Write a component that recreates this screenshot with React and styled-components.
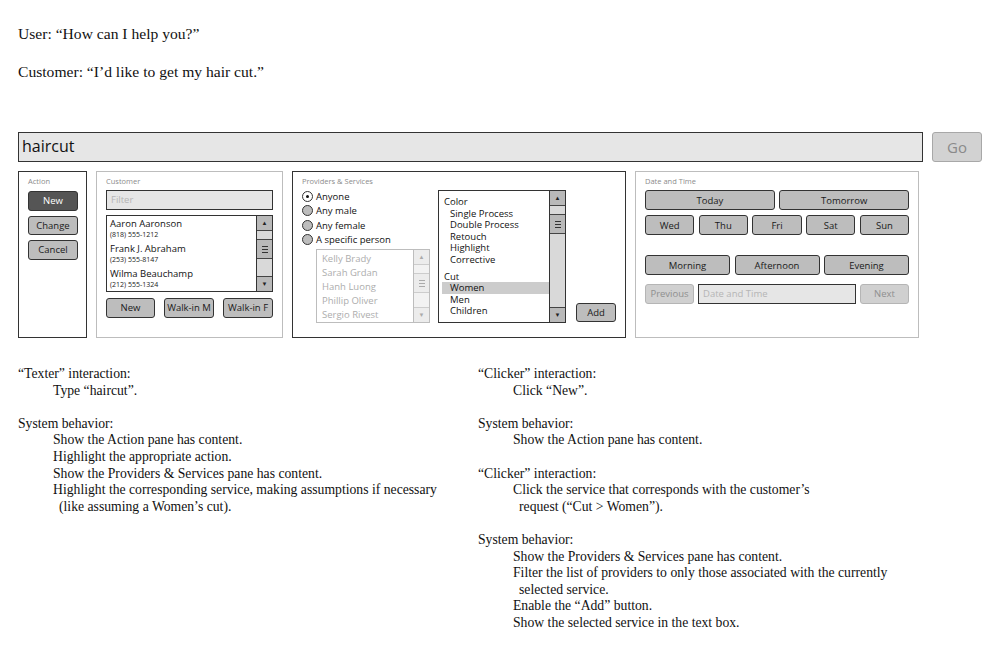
import styled, { createGlobalStyle } from 'styled-components';

const GlobalStyle = createGlobalStyle`
    body {
        margin: 0;
        background: #ffffff;
        color: #111111;
        font-family: 'Liberation Serif', 'Times New Roman', serif;
    }
`;

const customers = [
    { name: 'Aaron Aaronson', phone: '(818) 555-1212' },
    { name: 'Frank J. Abraham', phone: '(253) 555-8147' },
    { name: 'Wilma Beauchamp', phone: '(212) 555-1324' },
];

const providers = ['Kelly Brady', 'Sarah Grdan', 'Hanh Luong', 'Phillip Oliver', 'Sergio Rivest'];

const services = [
    { group: 'Color', items: ['Single Process', 'Double Process', 'Retouch', 'Highlight', 'Corrective'] },
    { group: 'Cut', items: ['Women', 'Men', 'Children'] },
];

function ScrollBar({ disabled }) {
    return (
        <Scroll $disabled={disabled}>
            <Arrow $disabled={disabled}>▲</Arrow>
            <TrackPiece $disabled={disabled} $h={8} />
            <Thumb $disabled={disabled}>
                <Grip $disabled={disabled} />
                <Grip $disabled={disabled} />
                <Grip $disabled={disabled} />
            </Thumb>
            <TrackPiece $disabled={disabled} $grow />
            <Arrow $disabled={disabled}>▼</Arrow>
        </Scroll>
    );
}

export default function App() {
    return (
        <Page>
            <GlobalStyle />
            <Dialog>
                <p>User: “How can I help you?”</p>
                <p>Customer: “I’d like to get my hair cut.”</p>
            </Dialog>

            <SearchRow>
                <SearchBox>haircut</SearchBox>
                <GoButton>Go</GoButton>
            </SearchRow>

            <PaneRow>
                <Pane $w={69} $dark>
                    <PaneLabel>Action</PaneLabel>
                    <ActionStack>
                        <Btn $primary $w={50}>New</Btn>
                        <Btn $w={50}>Change</Btn>
                        <Btn $w={50}>Cancel</Btn>
                    </ActionStack>
                </Pane>

                <Pane $w={187}>
                    <PaneLabel>Customer</PaneLabel>
                    <FilterBox>Filter</FilterBox>
                    <ListBox $h={77}>
                        <ListBody>
                            {customers.map((c) => (
                                <CustomerItem key={c.name}>
                                    <CustomerName>{c.name}</CustomerName>
                                    <CustomerPhone>{c.phone}</CustomerPhone>
                                </CustomerItem>
                            ))}
                        </ListBody>
                        <ScrollBar />
                    </ListBox>
                    <ButtonRow>
                        <Btn $w={49}>New</Btn>
                        <Btn $w={50}>Walk-in M</Btn>
                        <Btn $w={50}>Walk-in F</Btn>
                    </ButtonRow>
                </Pane>

                <Pane $w={334} $dark>
                    <PaneLabel>Providers &amp; Services</PaneLabel>
                    <ProvidersLayout>
                        <ProviderColumn>
                            <RadioList>
                                <RadioRow><Radio $checked />Anyone</RadioRow>
                                <RadioRow><Radio />Any male</RadioRow>
                                <RadioRow><Radio />Any female</RadioRow>
                                <RadioRow><Radio />A specific person</RadioRow>
                            </RadioList>
                            <ListBox $h={74} $w={114} $light>
                                <ListBody $pad="2px 0 0 5px">
                                    {providers.map((p) => (
                                        <ProviderItem key={p}>{p}</ProviderItem>
                                    ))}
                                </ListBody>
                                <ScrollBar disabled />
                            </ListBox>
                        </ProviderColumn>
                        <ListBox $h={133} $w={128}>
                            <ListBody $pad="5px 0 0 3px">
                                {services.map((s) => (
                                    <ServiceGroup key={s.group}>
                                        <ServiceItem>{s.group}</ServiceItem>
                                        {s.items.map((it) => (
                                            <ServiceItem key={it} $sub $selected={it === 'Women'}>
                                                {it}
                                            </ServiceItem>
                                        ))}
                                    </ServiceGroup>
                                ))}
                            </ListBody>
                            <ScrollBar />
                        </ListBox>
                        <AddButton $w={40}>Add</AddButton>
                    </ProvidersLayout>
                </Pane>

                <Pane $w={284}>
                    <PaneLabel>Date and Time</PaneLabel>
                    <DateGrid $cols={2}>
                        <Btn>Today</Btn>
                        <Btn>Tomorrow</Btn>
                    </DateGrid>
                    <DateGrid $cols={5} $top={5}>
                        <Btn>Wed</Btn>
                        <Btn>Thu</Btn>
                        <Btn>Fri</Btn>
                        <Btn>Sat</Btn>
                        <Btn>Sun</Btn>
                    </DateGrid>
                    <DateGrid $cols={3} $top={20}>
                        <Btn>Morning</Btn>
                        <Btn>Afternoon</Btn>
                        <Btn>Evening</Btn>
                    </DateGrid>
                    <NavRow>
                        <Btn $disabled $w={49}>Previous</Btn>
                        <DateBox>Date and Time</DateBox>
                        <Btn $disabled $w={49}>Next</Btn>
                    </NavRow>
                </Pane>
            </PaneRow>

            <Notes>
                <NoteColumn>
                    <p>“Texter” interaction:</p>
                    <Indent>Type “haircut”.</Indent>
                    <Blank />
                    <p>System behavior:</p>
                    <Indent>Show the Action pane has content.</Indent>
                    <Indent>Highlight the appropriate action.</Indent>
                    <Indent>Show the Providers &amp; Services pane has content.</Indent>
                    <Indent>Highlight the corresponding service, making assumptions if necessary</Indent>
                    <Indent $more>(like assuming a Women’s cut).</Indent>
                </NoteColumn>
                <NoteColumn>
                    <p>“Clicker” interaction:</p>
                    <Indent>Click “New”.</Indent>
                    <Blank />
                    <p>System behavior:</p>
                    <Indent>Show the Action pane has content.</Indent>
                    <Blank />
                    <p>“Clicker” interaction:</p>
                    <Indent>Click the service that corresponds with the customer’s</Indent>
                    <Indent $more>request (“Cut &gt; Women”).</Indent>
                    <Blank />
                    <p>System behavior:</p>
                    <Indent>Show the Providers &amp; Services pane has content.</Indent>
                    <Indent>Filter the list of providers to only those associated with the currently</Indent>
                    <Indent $more>selected service.</Indent>
                    <Indent>Enable the “Add” button.</Indent>
                    <Indent>Show the selected service in the text box.</Indent>
                </NoteColumn>
            </Notes>
        </Page>
    );
}

const Page = styled.div`
    width: 1000px;
    height: 662px;
    box-sizing: border-box;
    padding: 25px 18px 0;
    overflow: hidden;
`;

const Dialog = styled.div`
    display: flex;
    flex-direction: column;
    row-gap: 20px;
    font-size: 15.6px;
    line-height: 18px;

    p {
        margin: 0;
    }
`;

const SearchRow = styled.div`
    display: flex;
    column-gap: 9px;
    margin-top: 51px;
    height: 30px;
`;

const SearchBox = styled.div`
    width: 905px;
    box-sizing: border-box;
    background: #e6e6e6;
    border: 1.5px solid #333333;
    font-family: 'Open Sans', sans-serif;
    font-size: 16px;
    line-height: 27px;
    padding-left: 3px;
    color: #111111;
`;

const GoButton = styled.div`
    width: 50px;
    box-sizing: border-box;
    background: #d2d2d2;
    border: 1px solid #a8a8a8;
    border-radius: 3px;
    font-family: 'Open Sans', sans-serif;
    font-size: 15px;
    color: #8a8a8a;
    display: flex;
    justify-content: center;
    align-items: center;
`;

const PaneRow = styled.div`
    display: flex;
    column-gap: 9px;
    margin-top: 9px;
    height: 167px;
    font-family: 'Open Sans', sans-serif;
`;

const Pane = styled.div`
    width: ${(p) => p.$w}px;
    box-sizing: border-box;
    border: ${(p) => (p.$dark ? '1.5px solid #333333' : '1.5px solid #bdbdbd')};
    padding: 3px 9px 0 9px;
    display: flex;
    flex-direction: column;
`;

const PaneLabel = styled.div`
    font-size: 7.5px;
    line-height: 12px;
    color: #8c8c8c;
    margin-bottom: 3px;
`;

const ActionStack = styled.div`
    display: flex;
    flex-direction: column;
    row-gap: 5px;
    margin-top: 1px;
`;

const Btn = styled.div`
    ${(p) => (p.$w ? `width: ${p.$w}px;` : '')}
    height: 19.5px;
    box-sizing: border-box;
    border: 1.5px solid ${(p) => (p.$disabled ? '#b5b5b5' : '#333333')};
    border-radius: 3px;
    background: ${(p) => (p.$primary ? '#555555' : p.$disabled ? '#d0d0d0' : '#bdbdbd')};
    color: ${(p) => (p.$primary ? '#ffffff' : p.$disabled ? '#8f8f8f' : '#1a1a1a')};
    font-size: 9.5px;
    display: flex;
    justify-content: center;
    align-items: center;
    white-space: nowrap;
`;

const FilterBox = styled.div`
    height: 20px;
    box-sizing: border-box;
    background: #e6e6e6;
    border: 1.5px solid #333333;
    font-size: 9.5px;
    line-height: 17px;
    padding-left: 4px;
    color: #b5b5b5;
`;

const ListBox = styled.div`
    ${(p) => (p.$w ? `width: ${p.$w}px;` : '')}
    height: ${(p) => p.$h}px;
    box-sizing: border-box;
    border: 1.5px solid ${(p) => (p.$light ? '#bdbdbd' : '#333333')};
    display: flex;
    margin-top: ${(p) => (p.$w ? 0 : 5)}px;
    background: #ffffff;
`;

const ListBody = styled.div`
    flex: 1;
    padding: ${(p) => p.$pad || '1px 0 0 3px'};
    overflow: hidden;
`;

const Scroll = styled.div`
    width: 16px;
    box-sizing: border-box;
    border-left: 1.5px solid ${(p) => (p.$disabled ? '#bdbdbd' : '#333333')};
    display: flex;
    flex-direction: column;
`;

const Arrow = styled.div`
    height: 15px;
    background: ${(p) => (p.$disabled ? '#ececec' : '#b9b9b9')};
    color: ${(p) => (p.$disabled ? '#aaaaaa' : '#222222')};
    font-size: 6px;
    display: flex;
    justify-content: center;
    align-items: center;
    border-top: 1px solid ${(p) => (p.$disabled ? '#cccccc' : '#444444')};
    border-bottom: 1px solid ${(p) => (p.$disabled ? '#cccccc' : '#444444')};
    box-sizing: border-box;

    &:first-child {
        border-top: none;
    }

    &:last-child {
        border-bottom: none;
    }
`;

const TrackPiece = styled.div`
    ${(p) => (p.$grow ? 'flex: 1;' : `height: ${p.$h}px;`)}
    background: ${(p) => (p.$disabled ? '#f2f2f2' : '#d9d9d9')};
`;

const Thumb = styled.div`
    height: 20px;
    box-sizing: border-box;
    background: ${(p) => (p.$disabled ? '#ececec' : '#b9b9b9')};
    border-top: 1px solid ${(p) => (p.$disabled ? '#cccccc' : '#444444')};
    border-bottom: 1px solid ${(p) => (p.$disabled ? '#cccccc' : '#444444')};
    display: flex;
    flex-direction: column;
    justify-content: center;
    align-items: center;
    row-gap: 2px;
`;

const Grip = styled.div`
    width: 6px;
    height: 1px;
    background: ${(p) => (p.$disabled ? '#aaaaaa' : '#333333')};
`;

const CustomerItem = styled.div`
    height: 25px;
    display: flex;
    flex-direction: column;
`;

const CustomerName = styled.div`
    font-size: 9.5px;
    line-height: 13px;
    color: #111111;
    white-space: nowrap;
`;

const CustomerPhone = styled.div`
    font-size: 7px;
    line-height: 10px;
    color: #222222;
`;

const ButtonRow = styled.div`
    display: flex;
    justify-content: space-between;
    margin-top: 6px;
    height: 20px;
`;

const ProvidersLayout = styled.div`
    display: flex;
    align-items: flex-start;
    column-gap: 8px;
`;

const ProviderColumn = styled.div`
    width: 128px;
    display: flex;
    flex-direction: column;
    align-items: flex-end;
`;

const RadioList = styled.div`
    align-self: stretch;
    display: flex;
    flex-direction: column;
    margin-top: -1px;
    margin-bottom: 2px;
`;

const RadioRow = styled.div`
    display: flex;
    align-items: center;
    column-gap: 3px;
    height: 14.5px;
    font-size: 9.5px;
    color: #111111;
    white-space: nowrap;
`;

const Radio = styled.span`
    width: 11px;
    height: 11px;
    box-sizing: border-box;
    border-radius: 50%;
    border: 1.5px solid #333333;
    background: ${(p) => (p.$checked ? '#ffffff' : '#bdbdbd')};
    display: flex;
    justify-content: center;
    align-items: center;

    &::after {
        content: '';
        width: 3px;
        height: 3px;
        border-radius: 50%;
        background: ${(p) => (p.$checked ? '#111111' : 'transparent')};
    }
`;

const ProviderItem = styled.div`
    font-size: 9.5px;
    line-height: 14px;
    color: #adadad;
    white-space: nowrap;
`;

const ServiceGroup = styled.div`
    margin-bottom: 5px;
`;

const ServiceItem = styled.div`
    font-size: 9.5px;
    line-height: 11.6px;
    color: #111111;
    padding-left: ${(p) => (p.$sub ? 8 : 2)}px;
    background: ${(p) => (p.$selected ? '#cccccc' : 'transparent')};
    white-space: nowrap;
`;

const AddButton = styled(Btn)`
    align-self: flex-end;
    margin-left: 2px;
    margin-bottom: 1px;
`;

const DateGrid = styled.div`
    display: grid;
    grid-template-columns: repeat(${(p) => p.$cols}, 1fr);
    column-gap: 4.5px;
    margin-top: ${(p) => p.$top || 0}px;

    & > div {
        height: 20px;
    }
`;

const NavRow = styled.div`
    display: flex;
    column-gap: 4px;
    margin-top: 9px;
    height: 20px;
`;

const DateBox = styled.div`
    flex: 1;
    box-sizing: border-box;
    background: #e6e6e6;
    border: 1.5px solid #333333;
    font-size: 9.5px;
    line-height: 17px;
    padding-left: 4px;
    color: #b5b5b5;
`;

const Notes = styled.div`
    display: grid;
    grid-template-columns: 460px 1fr;
    margin-top: 28px;
    font-size: 13.7px;
    line-height: 16.6px;

    p {
        margin: 0;
        white-space: nowrap;
    }
`;

const NoteColumn = styled.div`
    display: flex;
    flex-direction: column;
`;

const Indent = styled.p`
    padding-left: ${(p) => (p.$more ? 41 : 35)}px;
`;

const Blank = styled.div`
    height: 16.6px;
`;
